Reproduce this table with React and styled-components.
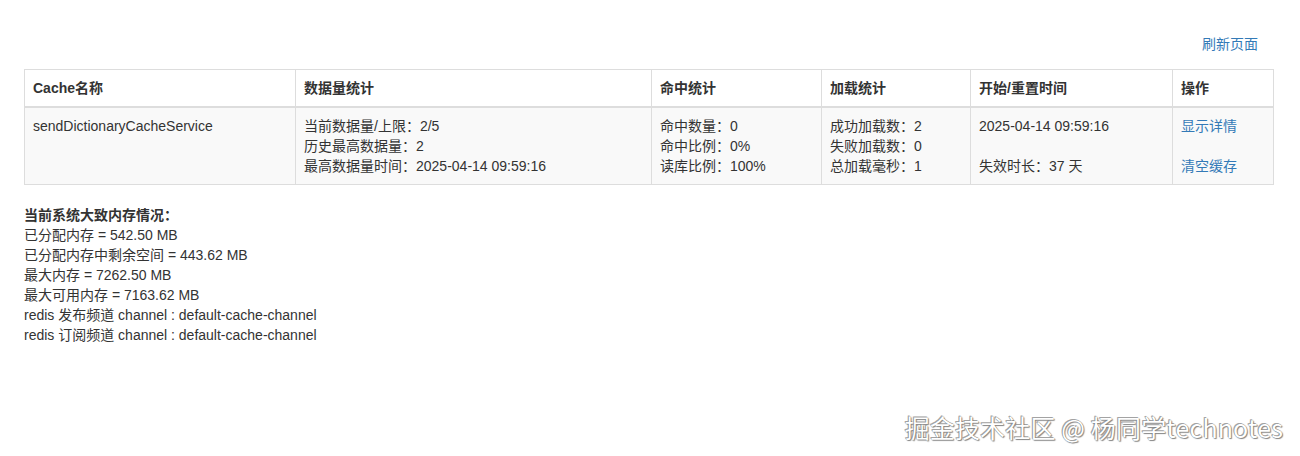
import React from 'react';
import styled, { createGlobalStyle } from 'styled-components';

const Global = createGlobalStyle`
  html, body { margin: 0; padding: 0; background: #fff; }
  body {
    font-family: "Liberation Sans", Arial, "Noto Sans CJK SC", sans-serif;
    font-size: 14px;
    line-height: 20px;
    color: #333;
  }
`;

const Page = styled.div`
  position: relative;
  height: 456px;
  padding: 34px 27px 0 24px;
  box-sizing: border-box;
`;

const TopBar = styled.div`
  display: flex;
  justify-content: flex-end;
  padding-right: 15px;
  margin-bottom: 15px;
`;

const A = styled.a`
  color: #337ab7;
  text-decoration: none;
  cursor: pointer;
`;

const Table = styled.table`
  width: 100%;
  border-collapse: collapse;
  border-spacing: 0;
  table-layout: fixed;
  border: 1px solid #ddd;
`;

const Th = styled.th`
  text-align: left;
  font-weight: bold;
  padding: 8px;
  border: 1px solid #ddd;
  border-bottom: 2px solid #ddd;
  vertical-align: bottom;
`;

const Td = styled.td`
  padding: 8px;
  border: 1px solid #ddd;
  vertical-align: top;
  background: #f9f9f9;
`;

const Line = styled.div`
  height: 20px;
  white-space: nowrap;
`;

const Memory = styled.div`
  margin-top: 20px;
`;

const MemTitle = styled.div`
  font-weight: bold;
`;

// 水印
const Watermark = styled.div`
  position: absolute;
  right: 17px;
  top: 411px;
  font-size: 25px;
  line-height: 32px;
  letter-spacing: 0.15px;
  color: #fff;
  text-shadow: 0 0 1px #666, 1px 1px 1px #888, -1px -1px 0 #aaa;
  font-family: "Noto Sans CJK SC", "Liberation Sans", sans-serif;
`;

const cols = [271, 356, 170, 149, 202, 101];

const App = () => (
  <Page>
    <Global />
    <TopBar>
      <A>刷新页面</A>
    </TopBar>
    <Table>
      <colgroup>
        {cols.map((w, i) => (
          <col key={i} style={{ width: w }} />
        ))}
      </colgroup>
      <thead>
        <tr>
          <Th>Cache名称</Th>
          <Th>数据量统计</Th>
          <Th>命中统计</Th>
          <Th>加载统计</Th>
          <Th>开始/重置时间</Th>
          <Th>操作</Th>
        </tr>
      </thead>
      <tbody>
        <tr>
          <Td>sendDictionaryCacheService</Td>
          <Td>
            <Line>当前数据量/上限：2/5</Line>
            <Line>历史最高数据量：2</Line>
            <Line>最高数据量时间：2025-04-14 09:59:16</Line>
          </Td>
          <Td>
            <Line>命中数量：0</Line>
            <Line>命中比例：0%</Line>
            <Line>读库比例：100%</Line>
          </Td>
          <Td>
            <Line>成功加载数：2</Line>
            <Line>失败加载数：0</Line>
            <Line>总加载毫秒：1</Line>
          </Td>
          <Td>
            <Line>2025-04-14 09:59:16</Line>
            <Line />
            <Line>失效时长：37 天</Line>
          </Td>
          <Td>
            <Line><A>显示详情</A></Line>
            <Line />
            <Line><A>清空缓存</A></Line>
          </Td>
        </tr>
      </tbody>
    </Table>
    <Memory>
      <MemTitle>当前系统大致内存情况：</MemTitle>
      <div>已分配内存 = 542.50 MB</div>
      <div>已分配内存中剩余空间 = 443.62 MB</div>
      <div>最大内存 = 7262.50 MB</div>
      <div>最大可用内存 = 7163.62 MB</div>
      <div>redis 发布频道 channel : default-cache-channel</div>
      <div>redis 订阅频道 channel : default-cache-channel</div>
    </Memory>
    <Watermark>掘金技术社区 @ 杨同学technotes</Watermark>
  </Page>
);

export default App;
